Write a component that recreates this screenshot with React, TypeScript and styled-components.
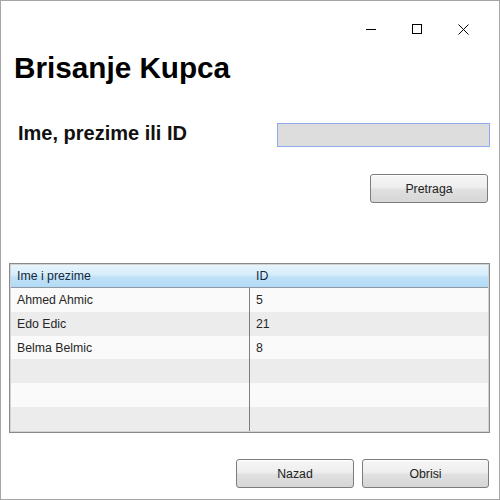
import React from "react"
import styled, { createGlobalStyle } from "styled-components"

type Customer = {
  name: string
  id: string
}

const customers: Customer[] = [
  { name: "Ahmed Ahmic", id: "5" },
  { name: "Edo Edic", id: "21" },
  { name: "Belma Belmic", id: "8" },
  { name: "", id: "" },
  { name: "", id: "" },
  { name: "", id: "" },
]

const GlobalStyle = createGlobalStyle`
  html, body {
    margin: 0;
    padding: 0;
    background: #ffffff;
  }

  body {
    font-family: "Liberation Sans", Arial, sans-serif;
  }
`

const Window = styled.div`
  display: flex;
  flex-direction: column;

  width: 500px;
  height: 500px;
  box-sizing: border-box;

  border: 1px solid #a6a6a6;
  background: #ffffff;
`

const TitleBar = styled.div`
  display: flex;
  justify-content: flex-end;

  height: 30px;
  padding: 13px 13px 0 0;
`

const CaptionButton = styled.div`
  display: flex;
  align-items: center;
  justify-content: center;

  width: 46px;
  height: 30px;
`

const Title = styled.h1`
  margin: 7px 0 0;
  padding-left: 13px;

  font-size: 29.7px;
  font-weight: 700;
  line-height: 34px;

  color: #000000;
`

const SearchRow = styled.div`
  display: flex;
  justify-content: space-between;
  align-items: flex-start;

  margin-top: 36px;
  padding: 0 9px 0 17px;
`

const Label = styled.label`
  font-size: 20px;
  font-weight: 700;
  line-height: 24px;

  color: #111111;
`

const SearchInput = styled.input`
  width: 213px;
  height: 24px;
  box-sizing: border-box;

  margin-top: 2px;

  border: 1px solid #8fabee;
  background: #dddddd;
  outline: none;
`

const ActionRow = styled.div<{ $top: number; $right: number }>`
  display: flex;
  justify-content: flex-end;
  gap: 8px;

  margin-top: ${(p) => p.$top}px;
  padding-right: ${(p) => p.$right}px;
`

const Button = styled.button<{ $width: number }>`
  width: ${(p) => p.$width}px;
  height: 29px;

  border: 1px solid #7c7c7c;
  border-radius: 3px;
  background: linear-gradient(to bottom, #f6f6f6 0%, #eeeeee 45%, #e0e0e0 55%, #d6d6d6 100%);
  box-shadow: inset 0 1px 0 #ffffff;

  font-family: "Liberation Sans", Arial, sans-serif;
  font-size: 12.3px;

  color: #222222;
`

const Table = styled.div`
  display: flex;
  flex-direction: column;

  width: 481px;
  height: 170px;
  box-sizing: border-box;

  margin: 60px 0 0 8px;
  padding: 1px;

  border: 1px solid #8a8a8a;
  background: #d2d2d2;
`

const HeaderRow = styled.div`
  display: grid;
  grid-template-columns: 239px 1fr;

  height: 22px;

  border-bottom: 1px solid #8e9aa4;
  background: linear-gradient(to bottom, #e7f4fc 0%, #d6edfb 45%, #bfe1f8 55%, #b3daf5 100%);
`

const HeaderCell = styled.div`
  display: flex;
  align-items: center;

  padding-left: 6px;

  font-size: 12.3px;

  color: #14283a;
`

const Row = styled.div<{ $even: boolean }>`
  display: grid;
  grid-template-columns: 239px 1fr;

  height: 24px;

  background: ${(p) => (p.$even ? "#ececec" : "#fafafa")};
`

const Cell = styled.div<{ $divider?: boolean }>`
  display: flex;
  align-items: center;

  padding-left: 6px;

  border-right: ${(p) => (p.$divider ? "1px solid #7e7e7e" : "none")};

  font-size: 12.3px;

  color: #262626;
`

const App = () => {
  return (
    <>
      <GlobalStyle />
      <Window>
        <TitleBar>
          <CaptionButton>
            <svg width="10" height="10" viewBox="0 0 10 10">
              <path d="M0 5.5 H10" stroke="#000" strokeWidth="1" />
            </svg>
          </CaptionButton>
          <CaptionButton>
            <svg width="10" height="10" viewBox="0 0 10 10">
              <rect x="0.5" y="0.5" width="9" height="9" fill="none" stroke="#000" strokeWidth="1" />
            </svg>
          </CaptionButton>
          <CaptionButton>
            <svg width="11" height="11" viewBox="0 0 11 11">
              <path d="M0.5 0.5 L10.5 10.5 M10.5 0.5 L0.5 10.5" stroke="#000" strokeWidth="1" />
            </svg>
          </CaptionButton>
        </TitleBar>

        <Title>Brisanje Kupca</Title>

        <SearchRow>
          <Label>Ime, prezime ili ID</Label>
          <SearchInput />
        </SearchRow>

        <ActionRow $top={27} $right={11}>
          <Button $width={118}>Pretraga</Button>
        </ActionRow>

        <Table>
          <HeaderRow>
            <HeaderCell>Ime i prezime</HeaderCell>
            <HeaderCell>ID</HeaderCell>
          </HeaderRow>
          {customers.map((c, idx) => (
            <Row key={idx} $even={idx % 2 === 1}>
              <Cell $divider>{c.name}</Cell>
              <Cell>{c.id}</Cell>
            </Row>
          ))}
        </Table>

        <ActionRow $top={26} $right={10}>
          <Button $width={118}>Nazad</Button>
          <Button $width={127}>Obrisi</Button>
        </ActionRow>
      </Window>
    </>
  )
}

export default App
